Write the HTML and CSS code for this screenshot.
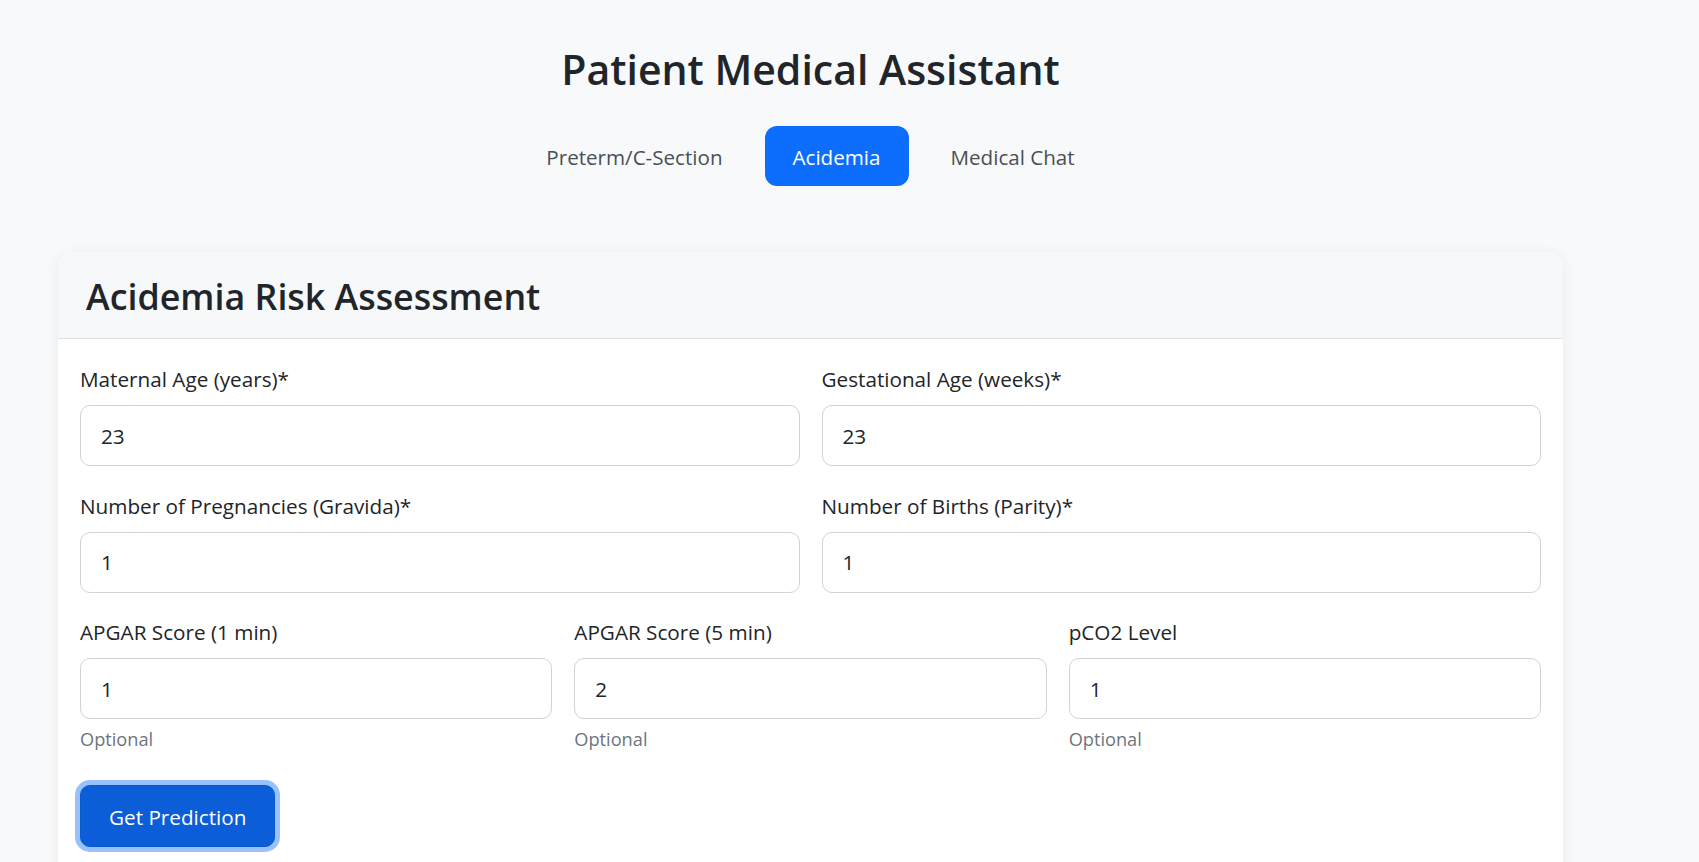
FILE: index.html
```html
<!DOCTYPE html>
<html lang="en">
<head>
<meta charset="utf-8">
<title>Patient Medical Assistant</title>
<link rel="stylesheet" href="styles.css">
</head>
<body>
<div class="container">
  <h1 class="title">Patient Medical Assistant</h1>
  <nav class="tabs">
    <a class="tab" href="#">Preterm/C-Section</a>
    <a class="tab active" href="#">Acidemia</a>
    <a class="tab" href="#">Medical Chat</a>
  </nav>
  <section class="card">
    <div class="card-header">
      <h2 class="card-title">Acidemia Risk Assessment</h2>
    </div>
    <form class="card-body">
      <div class="row two">
        <div class="field">
          <label class="label">Maternal Age (years)*</label>
          <input class="input" type="text" value="23">
        </div>
        <div class="field">
          <label class="label">Gestational Age (weeks)*</label>
          <input class="input" type="text" value="23">
        </div>
      </div>
      <div class="row two">
        <div class="field">
          <label class="label">Number of Pregnancies (Gravida)*</label>
          <input class="input" type="text" value="1">
        </div>
        <div class="field">
          <label class="label">Number of Births (Parity)*</label>
          <input class="input" type="text" value="1">
        </div>
      </div>
      <div class="row three">
        <div class="field">
          <label class="label">APGAR Score (1 min)</label>
          <input class="input" type="text" value="1">
          <small class="hint">Optional</small>
        </div>
        <div class="field">
          <label class="label">APGAR Score (5 min)</label>
          <input class="input" type="text" value="2">
          <small class="hint">Optional</small>
        </div>
        <div class="field">
          <label class="label">pCO2 Level</label>
          <input class="input" type="text" value="1">
          <small class="hint">Optional</small>
        </div>
      </div>
      <div class="actions">
        <button class="btn" type="button">Get Prediction</button>
      </div>
    </form>
  </section>
</div>
</body>
</html>
```
FILE: styles.css
```css
* { box-sizing: border-box; }

html, body {
  margin: 0;
  padding: 0;
  background: #f8f9fa;
  color: #212529;
  font-family: "Open Sans", "Noto Sans", sans-serif;
}

.container {
  width: 1505px;
  margin-left: 58px;
  padding-top: 44px;
}

.title {
  margin: 0;
  text-align: center;
  font-size: 41px;
  line-height: 50px;
  font-weight: 600;
  color: #212529;
}

.tabs {
  display: flex;
  justify-content: center;
  gap: 14px;
  margin-top: 32px;
}

.tab {
  display: block;
  padding: 16px 28px 14px;
  font-size: 20.6px;
  line-height: 30px;
  color: #495057;
  text-decoration: none;
  border-radius: 12px;
}

.tab.active {
  background: #0d6efd;
  color: #ffffff;
}

.card {
  margin-top: 66px;
  background: #ffffff;
  border-radius: 15px;
  box-shadow: 0 2px 14px rgba(0, 0, 0, 0.06);
  overflow: hidden;
}

.card-header {
  padding: 22px 28px 20px;
  background: #f7f8f9;
  border-bottom: 1px solid #dee2e6;
}

.card-title {
  margin: 0;
  font-size: 35.8px;
  line-height: 44px;
  font-weight: 600;
  color: #212529;
}

.card-body {
  padding: 26px 22px 40px;
}

.row {
  display: grid;
  column-gap: 22px;
}

.row + .row {
  margin-top: 25.5px;
}

.row.two { grid-template-columns: 1fr 1fr; }
.row.three { grid-template-columns: 1fr 1fr 1fr; }

.field {
  display: flex;
  flex-direction: column;
}

.label {
  display: block;
  margin-bottom: 12px;
  font-size: 20.7px;
  line-height: 28px;
  color: #212529;
}

.input {
  display: block;
  width: 100%;
  height: 61px;
  padding: 0 20px;
  font-family: inherit;
  font-size: 20.7px;
  color: #212529;
  background: #ffffff;
  border: 1px solid #ced4da;
  border-radius: 10px;
  outline: none;
}

.hint {
  display: block;
  margin-top: 8px;
  font-size: 18.2px;
  line-height: 24px;
  color: #6c757d;
}

.actions {
  margin-top: 34px;
  display: flex;
}

.btn {
  padding: 16.5px 28px 15.5px;
  font-family: inherit;
  font-size: 20.7px;
  line-height: 28px;
  color: #ffffff;
  background: #0b5ed7;
  border: 1px solid #0a58ca;
  border-radius: 10px;
  box-shadow: 0 0 0 5px rgba(49, 132, 253, 0.5);
  cursor: pointer;
}
```
